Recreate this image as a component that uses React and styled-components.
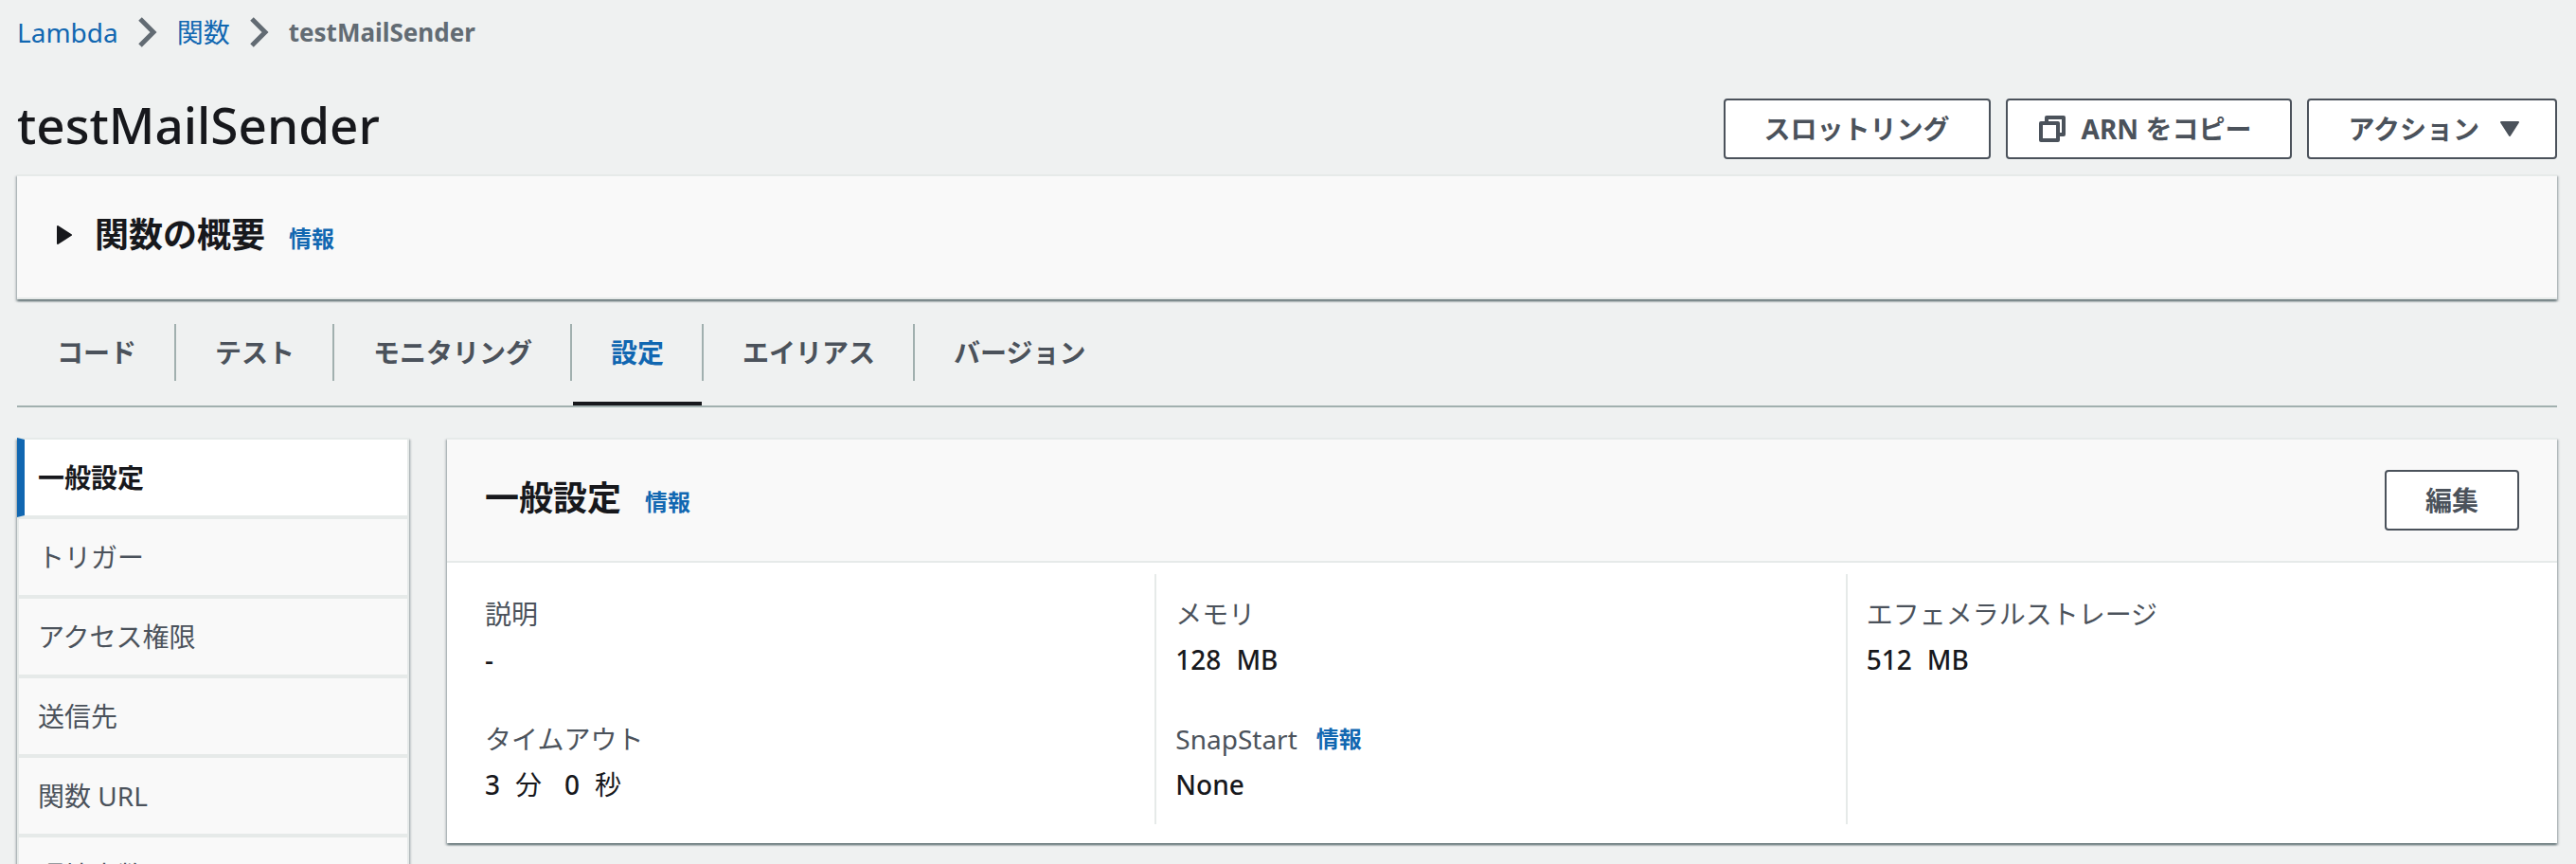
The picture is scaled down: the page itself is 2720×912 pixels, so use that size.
import React from "react";
import styled, { createGlobalStyle, css } from "styled-components";

const color = {
  page: "#eff1f1",
  surface: "#ffffff",
  header: "#f9f9f9",
  hairline: "#e6eae9",
  divider: "#a1b0af",
  ink: "#17181c",
  muted: "#4b525b",
  crumb: "#626b73",
  link: "#1167b1",
};

const GlobalStyle = createGlobalStyle`
  *, *::before, *::after { box-sizing: border-box; }
  body {
    margin: 0;
    background: ${color.page};
    color: ${color.ink};
    font-family: "Noto Sans", "Noto Sans CJK JP", sans-serif;
    font-size: 28px;
    line-height: 44px;
  }
`;

const Page = styled.div`
  height: 100vh;
  overflow: hidden;
  padding: 12px 20px 0 18px;
`;

const Link = styled.a`
  color: ${color.link};
  text-decoration: none;
`;

const InfoLink = styled(Link)`
  font-size: 24px;
  font-weight: 700;
`;

const Breadcrumbs = styled.nav`
  display: flex;
  align-items: center;
  gap: 21px;
`;

const Chevron = styled.svg`
  width: 20px;
  height: 32px;
  flex: none;
`;

const CurrentCrumb = styled.span`
  color: ${color.crumb};
  font-size: 26px;
  font-weight: 700;
`;

const TitleRow = styled.header`
  display: flex;
  align-items: center;
  justify-content: space-between;
  padding: 48px 0 16px;
`;

const Title = styled.h1`
  margin: 0;
  font-size: 53px;
  font-weight: 500;
  line-height: 56px;
  padding-bottom: 8px;
`;

const Actions = styled.div`
  display: flex;
  gap: 16px;
`;

const Button = styled.button`
  display: inline-flex;
  align-items: center;
  height: 64px;
  padding: 0 41px;
  border: 2px solid ${color.muted};
  border-radius: 4px;
  background: ${color.surface};
  color: ${color.muted};
  font: inherit;
  font-weight: 700;
  white-space: nowrap;
`;

const CopyGlyph = styled.svg`
  width: 28px;
  height: 28px;
  margin: 0 17px 0 -8px;
`;

const CaretGlyph = styled.svg`
  width: 20px;
  height: 16px;
  margin: 0 -3px 0 22px;
`;

const panel = css`
  box-shadow: 0 2px 2px 0 rgba(0, 28, 36, 0.45), 2px 2px 2px 0 rgba(0, 28, 36, 0.15),
    -2px 2px 2px 0 rgba(0, 28, 36, 0.15);
`;

const Overview = styled.section`
  ${panel}
  display: flex;
  align-items: center;
  height: 132px;
  padding: 0 40px;
  border: solid ${color.hairline};
  border-width: 2px 0;
  background: ${color.header};
`;

const ExpandButton = styled.button`
  display: inline-flex;
  align-items: baseline;
  gap: 24px;
  padding: 0 0 4px 2px;
  border: 0;
  background: none;
  color: inherit;
  font: inherit;
`;

const ExpandGlyph = styled.svg`
  width: 16px;
  height: 20px;
  align-self: center;
`;

const Heading = styled.h2`
  margin: 0;
  font-size: 36px;
  font-weight: 700;
  line-height: 44px;
`;

const HeadingGroup = styled.div`
  display: flex;
  align-items: baseline;
  gap: 25px;
`;

const Tabs = styled.nav`
  display: flex;
  height: 114px;
  padding: 26px 0 0 1px;
  border-bottom: 2px solid ${color.divider};
`;

const Tab = styled.button`
  display: flex;
  flex-direction: column;
  justify-content: space-between;
  margin-left: 1px;
  padding: 0;
  border: 0;
  background: none;
  color: ${(p) => (p.$active ? color.link : color.muted)};
  font: inherit;
  font-weight: 700;

  &::after {
    content: "";
    align-self: stretch;
    height: 4px;
    margin-right: 2px;
    background: ${(p) => (p.$active ? color.ink : "transparent")};
  }
`;

const TabLabel = styled.span`
  padding: 8px 40px;
  border-right: 2px solid ${(p) => (p.$last ? "transparent" : color.divider)};
`;

const Content = styled.main`
  display: grid;
  grid-template-columns: 414px minmax(0, 1fr);
  align-items: start;
  gap: 40px;
  padding-top: 32px;
`;

const SideNav = styled.nav`
  ${panel}
`;

const SideLink = styled.a`
  display: block;
  height: 84px;
  padding: 18px 20px;
  border: 2px solid ${color.hairline};
  background: ${color.header};
  color: ${color.muted};
  text-decoration: none;
  ${(p) =>
    p.$active &&
    css`
      padding-left: 14px;
      border-left: 8px solid ${color.link};
      background: ${color.surface};
      color: ${color.ink};
      font-weight: 700;
    `}
`;

const Settings = styled.section`
  ${panel}
  border-top: 2px solid ${color.hairline};
  background: ${color.surface};
`;

const SettingsHeader = styled.div`
  display: flex;
  align-items: center;
  justify-content: space-between;
  padding: 32px 40px;
  border-bottom: 2px solid ${color.hairline};
  background: ${color.header};
`;

const Columns = styled.div`
  display: grid;
  grid-template-columns: repeat(3, minmax(0, 1fr));
  padding: 12px 20px 20px;
`;

const Column = styled.dl`
  display: flex;
  flex-direction: column;
  gap: 40px;
  margin: 0;
  padding: 20px;
  border-right: 2px solid ${color.hairline};

  &:last-child {
    border-right: 0;
  }
`;

const Field = styled.div`
  display: flex;
  flex-direction: column;
  gap: 4px;
`;

const Label = styled.dt`
  display: flex;
  gap: 20px;
  color: ${color.muted};
`;

const Value = styled.dd`
  display: flex;
  gap: 24px;
  margin: 0;
  font-weight: 500;
`;

const Quantity = styled.span`
  display: flex;
  gap: 16px;
`;

const Unit = styled.span`
  font-weight: ${(p) => (p.$light ? 400 : 500)};
`;

const Separator = () => (
  <Chevron viewBox="0 0 20 32" aria-hidden="true">
    <path d="M2 2 L16 16 L2 30" fill="none" stroke={color.crumb} strokeWidth="5" />
  </Chevron>
);

const tabs = ["コード", "テスト", "モニタリング", "設定", "エイリアス", "バージョン"];

const sections = ["一般設定", "トリガー", "アクセス権限", "送信先", "関数 URL", "環境変数"];

const columns = [
  [
    { label: "説明", value: [["-"]] },
    { label: "タイムアウト", value: [["3", "分"], ["0", "秒"]] },
  ],
  [
    { label: "メモリ", value: [["128", "MB"]] },
    { label: "SnapStart", value: [["None"]], info: true },
  ],
  [{ label: "エフェメラルストレージ", value: [["512", "MB"]] }],
];

export default function App() {
  return (
    <Page lang="ja">
      <GlobalStyle />
      <Breadcrumbs aria-label="パンくずリスト">
        <Link href="#lambda">Lambda</Link>
        <Separator />
        <Link href="#functions">関数</Link>
        <Separator />
        <CurrentCrumb aria-current="page">testMailSender</CurrentCrumb>
      </Breadcrumbs>

      <TitleRow>
        <Title>testMailSender</Title>
        <Actions>
          <Button type="button">スロットリング</Button>
          <Button type="button">
            <CopyGlyph viewBox="0 0 28 28" aria-hidden="true">
              <g fill="none" stroke="currentColor" strokeWidth="4" strokeLinejoin="round">
                <path d="M8 8 V2 H26 V20 H20" />
                <path d="M2 8 H20 V26 H2 Z" />
              </g>
            </CopyGlyph>
            ARN をコピー
          </Button>
          <Button type="button" aria-haspopup="menu">
            アクション
            <CaretGlyph viewBox="0 0 20 16" aria-hidden="true">
              <path
                d="M1 1 H19 L10 15 Z"
                fill="currentColor"
                stroke="currentColor"
                strokeWidth="2"
                strokeLinejoin="round"
              />
            </CaretGlyph>
          </Button>
        </Actions>
      </TitleRow>

      <Overview>
        <HeadingGroup>
          <ExpandButton type="button" aria-expanded="false">
            <ExpandGlyph viewBox="0 0 16 20" aria-hidden="true">
              <path
                d="M1 1 L15 10 L1 19 Z"
                fill="currentColor"
                stroke="currentColor"
                strokeWidth="2"
                strokeLinejoin="round"
              />
            </ExpandGlyph>
            <Heading as="span">関数の概要</Heading>
          </ExpandButton>
          <InfoLink href="#overview-info">情報</InfoLink>
        </HeadingGroup>
      </Overview>

      <Tabs>
        {tabs.map((name, i) => (
          <Tab key={name} type="button" $active={name === "設定"}>
            <TabLabel $last={i === tabs.length - 1}>{name}</TabLabel>
          </Tab>
        ))}
      </Tabs>

      <Content>
        <SideNav aria-label="設定">
          {sections.map((name, i) => (
            <SideLink key={name} href={`#section-${i}`} $active={i === 0}>
              {name}
            </SideLink>
          ))}
        </SideNav>

        <Settings>
          <SettingsHeader>
            <HeadingGroup>
              <Heading>一般設定</Heading>
              <InfoLink href="#general-info">情報</InfoLink>
            </HeadingGroup>
            <Button type="button">編集</Button>
          </SettingsHeader>
          <Columns>
            {columns.map((fields, i) => (
              <Column key={i}>
                {fields.map(({ label, value, info }) => (
                  <Field key={label}>
                    <Label>
                      {label}
                      {info && <InfoLink href="#snapstart-info">情報</InfoLink>}
                    </Label>
                    <Value>
                      {value.map(([amount, unit]) => (
                        <Quantity key={amount}>
                          <span>{amount}</span>
                          {unit && <Unit $light={unit !== "MB"}>{unit}</Unit>}
                        </Quantity>
                      ))}
                    </Value>
                  </Field>
                ))}
              </Column>
            ))}
          </Columns>
        </Settings>
      </Content>
    </Page>
  );
}
